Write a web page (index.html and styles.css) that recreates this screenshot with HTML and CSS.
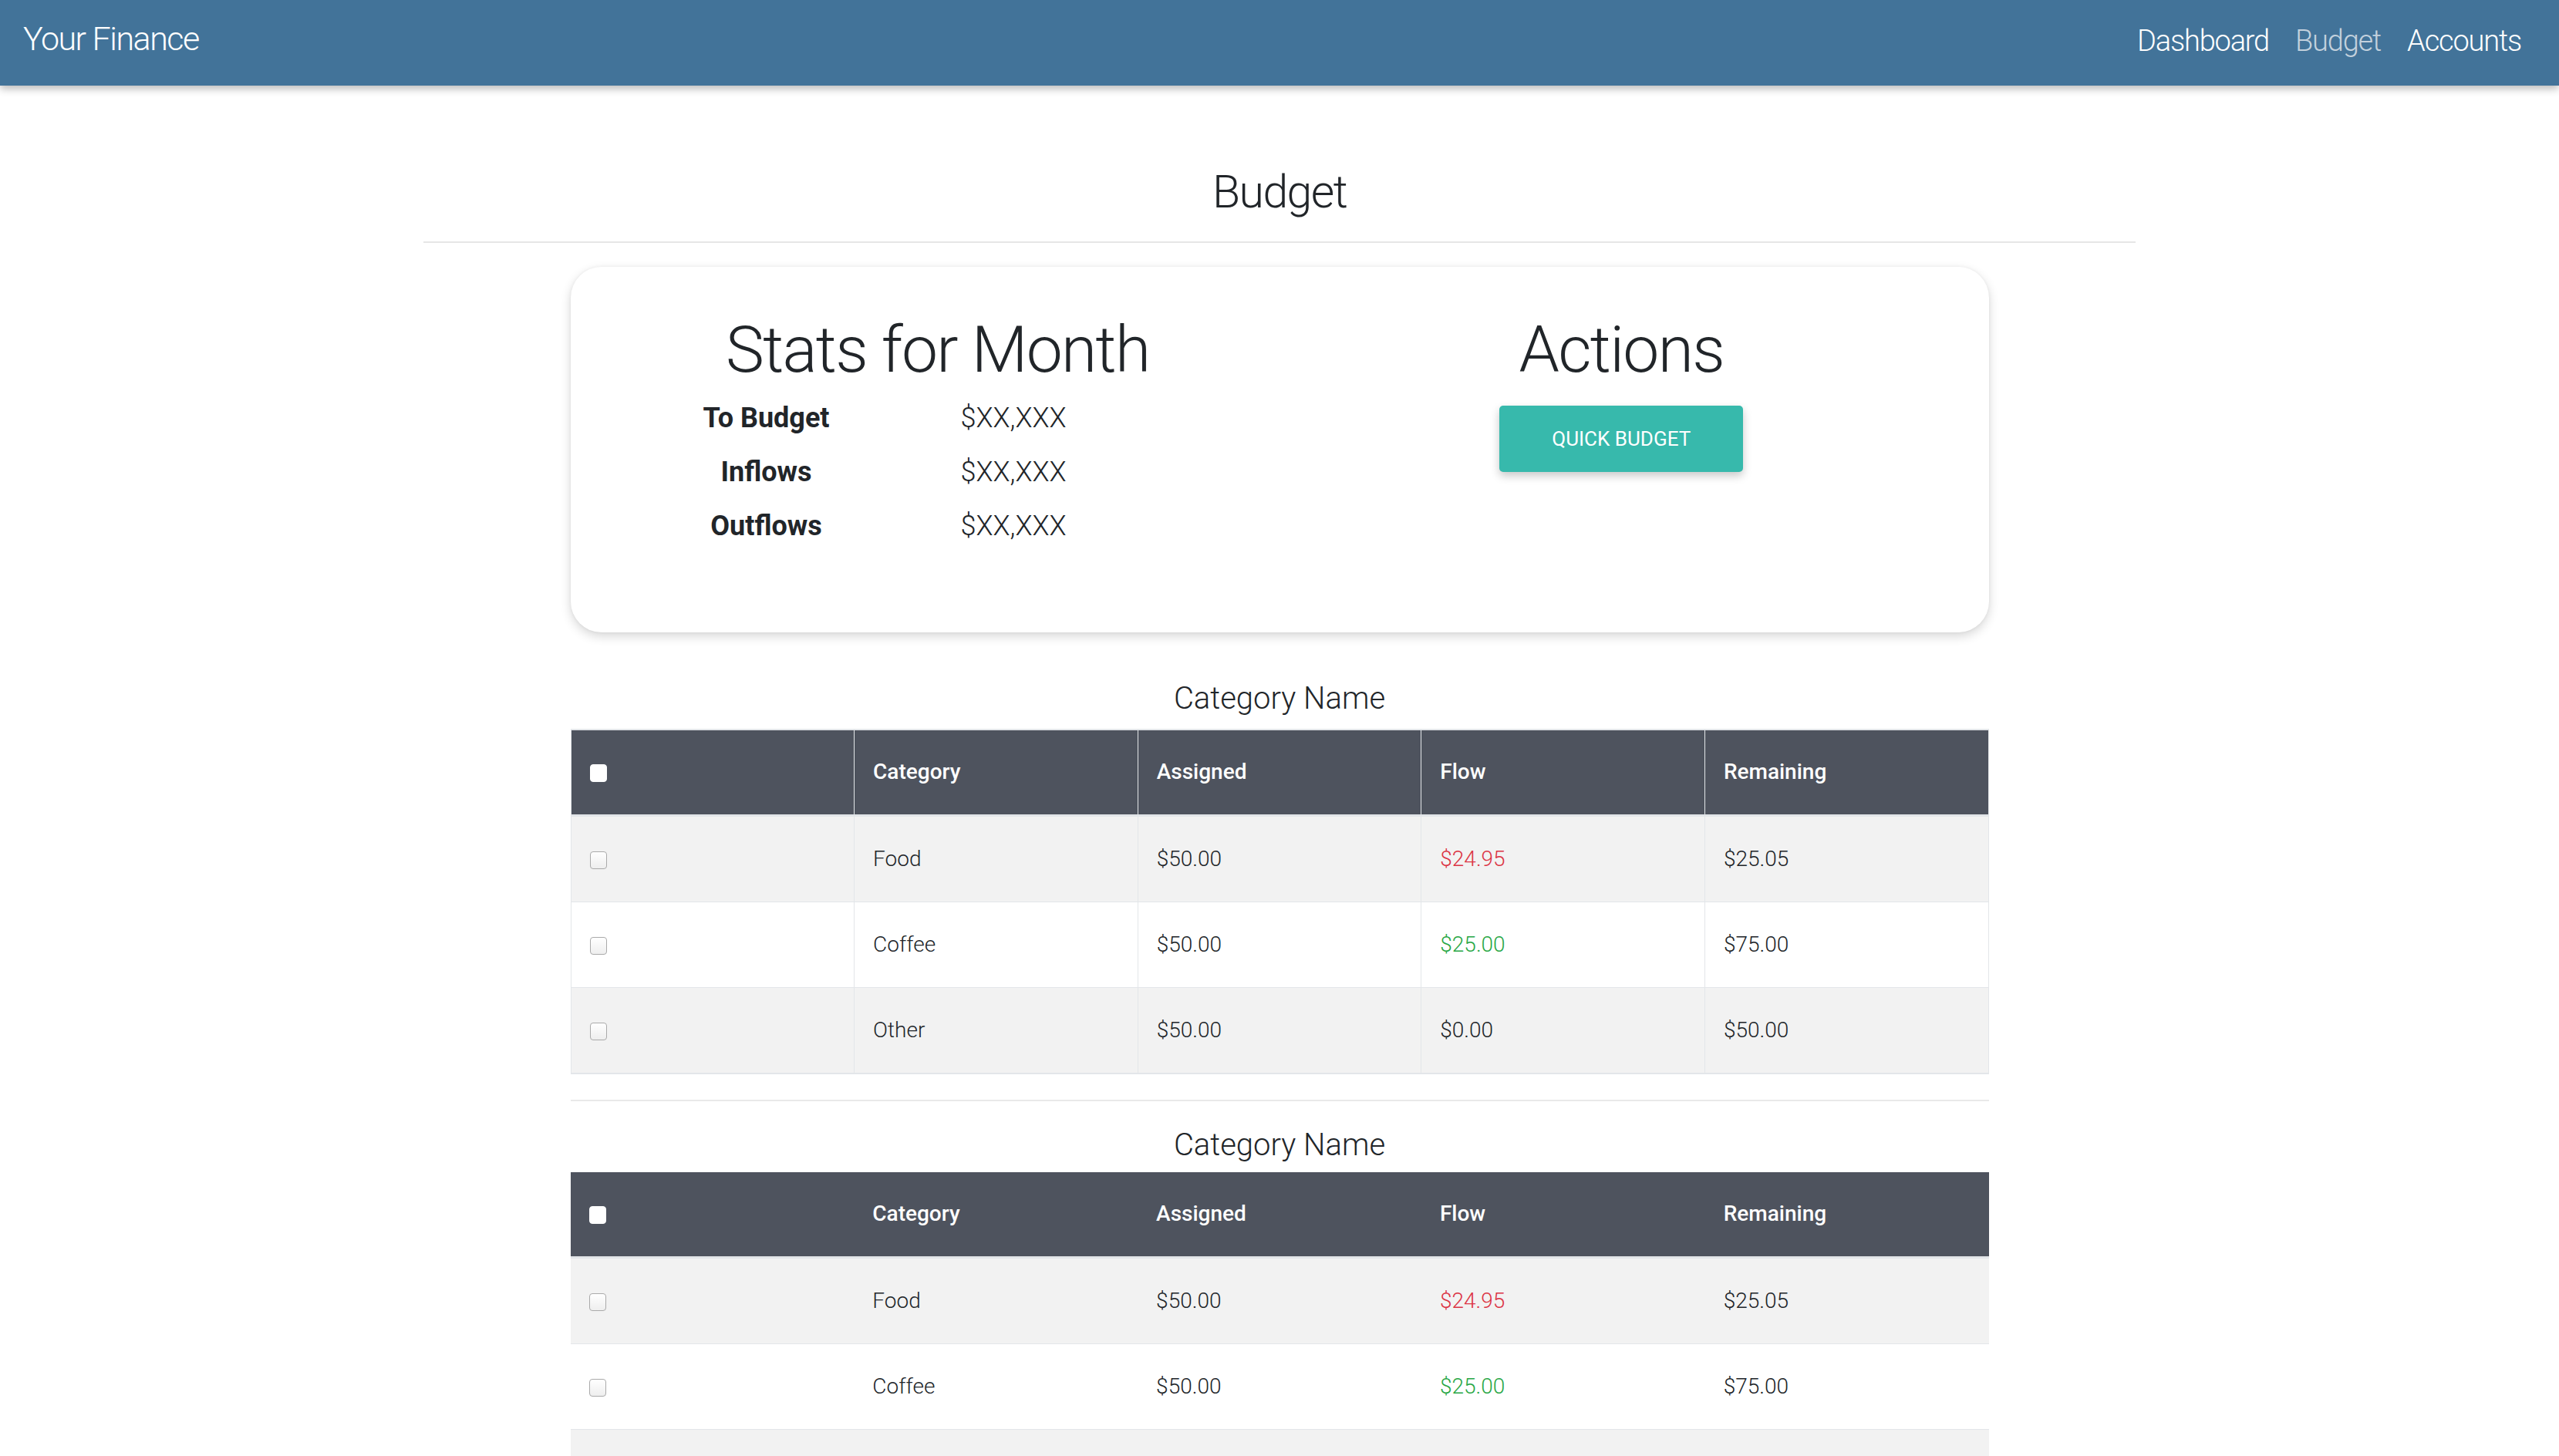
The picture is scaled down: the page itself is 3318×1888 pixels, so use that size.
FILE: index.html
```html
<!DOCTYPE html>
<html lang="en">
<head>
<meta charset="utf-8">
<title>Your Finance - Budget</title>
<link rel="stylesheet" href="styles.css">
</head>
<body>
<header class="navbar">
  <a class="brand" href="#">Your Finance</a>
  <nav class="nav">
    <a class="nav-link" href="#">Dashboard</a>
    <a class="nav-link active" href="#">Budget</a>
    <a class="nav-link" href="#">Accounts</a>
  </nav>
</header>

<main class="container">
  <h1 class="page-title">Budget</h1>
  <hr class="divider">

  <section class="content">
    <div class="card">
      <div class="card-col">
        <h2 class="card-title">Stats for Month</h2>
        <div class="stats">
          <div class="stat-label">To Budget</div><div class="stat-value">$XX,XXX</div>
          <div class="stat-label">Inflows</div><div class="stat-value">$XX,XXX</div>
          <div class="stat-label">Outflows</div><div class="stat-value">$XX,XXX</div>
        </div>
      </div>
      <div class="card-col">
        <h2 class="card-title">Actions</h2>
        <button class="btn-quick" type="button">Quick Budget</button>
      </div>
    </div>

    <h3 class="cat-title">Category Name</h3>
    <table class="budget-table bordered">
      <thead>
        <tr>
          <th><input type="checkbox" class="check check-head"></th>
          <th>Category</th><th>Assigned</th><th>Flow</th><th>Remaining</th>
        </tr>
      </thead>
      <tbody>
        <tr><td><input type="checkbox" class="check"></td><td>Food</td><td>$50.00</td><td class="neg">$24.95</td><td>$25.05</td></tr>
        <tr><td><input type="checkbox" class="check"></td><td>Coffee</td><td>$50.00</td><td class="pos">$25.00</td><td>$75.00</td></tr>
        <tr><td><input type="checkbox" class="check"></td><td>Other</td><td>$50.00</td><td>$0.00</td><td>$50.00</td></tr>
      </tbody>
    </table>

    <hr class="section-divider">

    <h3 class="cat-title second">Category Name</h3>
    <table class="budget-table">
      <thead>
        <tr>
          <th><input type="checkbox" class="check check-head"></th>
          <th>Category</th><th>Assigned</th><th>Flow</th><th>Remaining</th>
        </tr>
      </thead>
      <tbody>
        <tr><td><input type="checkbox" class="check"></td><td>Food</td><td>$50.00</td><td class="neg">$24.95</td><td>$25.05</td></tr>
        <tr><td><input type="checkbox" class="check"></td><td>Coffee</td><td>$50.00</td><td class="pos">$25.00</td><td>$75.00</td></tr>
        <tr><td><input type="checkbox" class="check"></td><td>Other</td><td>$50.00</td><td>$0.00</td><td>$50.00</td></tr>
      </tbody>
    </table>
  </section>
</main>
</body>
</html>
```

FILE: styles.css
```css
* { box-sizing: border-box; }

html, body {
  margin: 0;
  padding: 0;
  background: #ffffff;
}

body {
  font-family: Roboto, "Noto Sans", "Liberation Sans", sans-serif;
  color: #212529;
  font-weight: 300;
}

/* Navbar */
.navbar {
  height: 111px;
  background: #427399;
  display: flex;
  justify-content: space-between;
  align-items: flex-start;
  padding: 0 49px 0 30px;
  box-shadow: 0 4px 10px rgba(0, 0, 0, 0.28);
  position: relative;
  z-index: 2;
}

.brand {
  margin-top: 23px;
  font-size: 43px;
  line-height: 54px;
  letter-spacing: -1.5px;
  font-weight: 300;
  color: #ffffff;
  text-decoration: none;
}

.nav {
  display: flex;
  gap: 34px;
  margin-top: 30px;
}

.nav-link {
  font-size: 38px;
  line-height: 46px;
  letter-spacing: -1.2px;
  font-weight: 300;
  color: #ffffff;
  text-decoration: none;
}

.nav-link.active {
  color: #c3d1dd;
}

/* Page */
.container {
  width: 2220px;
  margin: 0 auto;
}

.page-title {
  margin: 102px 0 0;
  font-size: 59px;
  line-height: 71px;
  letter-spacing: -1.6px;
  font-weight: 300;
  text-align: center;
}

.divider {
  margin: 29px 0 31px;
  border: 0;
  border-top: 2px solid #e6e6e6;
  height: 0;
}

.content {
  width: 1839px;
  margin: 0 auto;
}

/* Card */
.card {
  display: grid;
  grid-template-columns: 1fr 1fr;
  padding: 57px 33px 103px;
  border-radius: 40px;
  background: #ffffff;
  box-shadow: 0 5px 14px rgba(0, 0, 0, 0.16), 0 0 4px rgba(0, 0, 0, 0.05);
}

.card-col {
  display: flex;
  flex-direction: column;
  align-items: center;
}

.card-col:first-child {
  align-items: stretch;
}

.card-title {
  margin: 0;
  font-size: 84px;
  line-height: 101px;
  letter-spacing: -1.7px;
  font-weight: 300;
  text-align: center;
}

.stats {
  display: grid;
  grid-template-columns: 320px auto;
  grid-auto-rows: 70px;
  margin: 3px 0 0 61px;
  font-size: 36px;
  line-height: 70px;
}

.stat-label {
  font-weight: 700;
  text-align: center;
}

.stat-value {
  font-weight: 300;
  padding-left: 92px;
}

.btn-quick {
  margin-top: 22px;
  width: 316px;
  height: 86px;
  border: 0;
  border-radius: 5px;
  background: #37b9ac;
  color: #ffffff;
  font-family: Roboto, "Liberation Sans", sans-serif;
  font-size: 26px;
  font-weight: 400;
  text-transform: uppercase;
  box-shadow: 0 5px 12px rgba(0, 0, 0, 0.22);
  cursor: pointer;
}

/* Category tables */
.cat-title {
  margin: 62px 0 15px;
  font-size: 40px;
  line-height: 48px;
  font-weight: 300;
  text-align: center;
}

.cat-title.second {
  margin: 33px 0 11px;
}

.budget-table {
  width: 100%;
  border-collapse: collapse;
  table-layout: fixed;
  font-size: 28px;
  line-height: 42px;
}

.budget-table th,
.budget-table td {
  text-align: left;
  vertical-align: middle;
  padding: 34px 24px;
  border-top: 1px solid #e3e6e9;
}

.budget-table th {
  background: #4e535e;
  color: #ffffff;
  font-weight: 500;
  padding: 33px 24px 34px;
  border-bottom: 3px solid #e3e6e9;
  border-top: 0;
}

.budget-table td {
  font-weight: 300;
}

.budget-table tbody tr:nth-child(odd) td {
  background: #f2f2f2;
}

.budget-table.bordered {
  border: 1px solid #e3e6e9;
  border-top: 2px solid #e3e6e9;
}

.budget-table.bordered th,
.budget-table.bordered td {
  border-left: 1px solid #e3e6e9;
  border-right: 1px solid #e3e6e9;
}

.budget-table.bordered tbody tr:last-child td {
  border-bottom: 2px solid #e3e6e9;
}

.neg { color: #dc3545; }
.pos { color: #28a745; }

.check {
  appearance: none;
  -webkit-appearance: none;
  display: inline-block;
  width: 22px;
  height: 23px;
  margin: 0;
  vertical-align: middle;
  border: 1px solid #aaaaaa;
  border-radius: 4px;
  background: linear-gradient(#ffffff, #eeeeee);
}

.check-head {
  border-color: #ffffff;
  background: #ffffff;
}

.section-divider {
  margin: 33px 0 0;
  border: 0;
  border-top: 2px solid #e9e9e9;
  height: 0;
}
```
